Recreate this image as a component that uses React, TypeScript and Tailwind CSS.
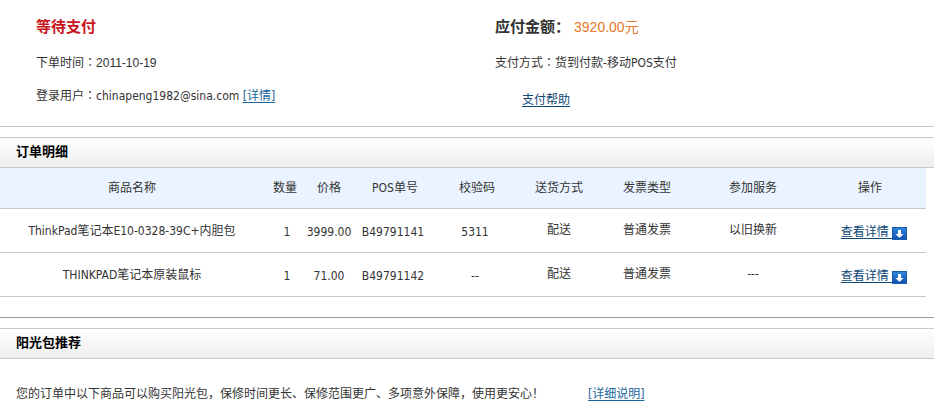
import type { ReactNode } from "react";

type Order = {
  name: string;
  quantity: string;
  price: string;
  pos: string;
  code: string;
  delivery: string;
  invoice: string;
  service: string;
};

const columns = [
  { label: "商品名称", width: "w-[264px]" },
  { label: "数量", width: "w-[42px]" },
  { label: "价格", width: "w-[46px]" },
  { label: "POS单号", width: "w-[86px]" },
  { label: "校验码", width: "w-[78px]" },
  { label: "送货方式", width: "w-[86px]" },
  { label: "发票类型", width: "w-[90px]" },
  { label: "参加服务", width: "w-[122px]" },
  { label: "操作", width: "w-[112px]" },
];

const orders: Order[] = [
  {
    name: "ThinkPad笔记本E10-0328-39C+内胆包",
    quantity: "1",
    price: "3999.00",
    pos: "B49791141",
    code: "5311",
    delivery: "配送",
    invoice: "普通发票",
    service: "以旧换新",
  },
  {
    name: "THINKPAD笔记本原装鼠标",
    quantity: "1",
    price: "71.00",
    pos: "B49791142",
    code: "--",
    delivery: "配送",
    invoice: "普通发票",
    service: "---",
  },
];

function Colon() {
  return <span className="font-['Noto_Sans_CJK_TC',sans-serif]">：</span>;
}

function SectionTitle({ children }: { children: ReactNode }) {
  return (
    <h2 className="border-y border-[#c9c9c9] bg-linear-to-b from-[#fefefe] to-[#eeeeee] px-4 pt-1 pb-[5px] text-[13px] leading-5 font-bold text-black">
      {children}
    </h2>
  );
}

function ArrowIcon() {
  return (
    <svg viewBox="0 0 15 13" className="h-[13px] w-[15px]" aria-hidden="true">
      <defs>
        <linearGradient id="arrow-blue" x1="0" y1="0" x2="0" y2="1">
          <stop offset="0" stopColor="#2e86d8" />
          <stop offset="1" stopColor="#1450b4" />
        </linearGradient>
      </defs>
      <rect width="15" height="13" fill="#1a5cae" />
      <rect x="1" y="1" width="13" height="11" fill="url(#arrow-blue)" />
      <path d="M6 3h3v4h2.5L7.5 11 3.5 7H6z" fill="#fff" />
    </svg>
  );
}

export default function App() {
  return (
    <main className="bg-white font-['DejaVu_Sans_Condensed','Noto_Sans_CJK_SC',sans-serif] text-xs leading-4 text-[#333]">
      <section className="flex border-b border-[#c9c9c9] pt-[17px] pb-4">
        <div className="flex w-[53%] flex-col pl-9">
          <h1 className="text-[15px] leading-5 font-bold text-[#c7161c]">等待支付</h1>
          <p className="mt-[15px] leading-5">
            下单时间
            <Colon />
            <span className="font-['Liberation_Sans',sans-serif]">2011-10-19</span>
          </p>
          <p className="mt-3 leading-5">
            登录用户
            <Colon />
            chinapeng1982@sina.com{" "}
            <a href="#account" className="text-[#1a669e] underline underline-offset-2">
              [详情]
            </a>
          </p>
        </div>
        <div className="flex flex-1 flex-col">
          <p className="flex text-[15px] leading-5">
            <strong>应付金额：</strong>
            <span className="pl-1 font-['Liberation_Sans','Noto_Sans_CJK_SC',sans-serif] text-sm leading-5 text-[#e8792a]">
              3920.00元
            </span>
          </p>
          <p className="mt-[15px] leading-5">
            支付方式
            <Colon />
            货到付款-移动POS支付
          </p>
          <p className="mt-[17px] pl-[27px] leading-5">
            <a href="#help" className="text-[#0f4775] underline underline-offset-2">
              支付帮助
            </a>
          </p>
        </div>
      </section>

      <section className="mt-[10px] border-b border-[#999] pb-5">
        <SectionTitle>订单明细</SectionTitle>
        <div className="pr-2">
          <table className="w-full table-fixed border-collapse text-center">
            <thead>
              <tr className="h-10 border-b border-[#c9c9c9] bg-[#eaf3ff]">
                {columns.map((column) => (
                  <th key={column.label} scope="col" className={`${column.width} p-0 font-normal whitespace-nowrap`}>
                    {column.label}
                  </th>
                ))}
              </tr>
            </thead>
            <tbody>
              {orders.map((order) => (
                <tr key={order.pos} className="h-11 border-b border-[#c9c9c9] whitespace-nowrap">
                  <td className="pt-0.5">{order.name}</td>
                  <td className="pt-1 pl-1">{order.quantity}</td>
                  <td className="pt-1">{order.price}</td>
                  <td className="pt-1 pr-1">{order.pos}</td>
                  <td className="pt-1 pr-1">{order.code}</td>
                  <td className="p-0">{order.delivery}</td>
                  <td className="p-0">{order.invoice}</td>
                  <td className="p-0">{order.service}</td>
                  <td className="pt-1">
                    <a href={`#${order.pos}`} className="inline-flex items-end pl-2 text-[#0f4775]">
                      <span className="whitespace-pre underline underline-offset-2">查看详情 </span>
                      <ArrowIcon />
                    </a>
                  </td>
                </tr>
              ))}
            </tbody>
          </table>
        </div>
      </section>

      <section className="mt-[10px]">
        <SectionTitle>阳光包推荐</SectionTitle>
        <p className="flex items-end gap-11 px-4 pt-[25px] leading-5">
          <span>您的订单中以下商品可以购买阳光包，保修时间更长、保修范围更广、多项意外保障，使用更安心！</span>
          <a href="#sunshine" className="text-[#1a669e] underline underline-offset-2">
            [详细说明]
          </a>
        </p>
      </section>
    </main>
  );
}
